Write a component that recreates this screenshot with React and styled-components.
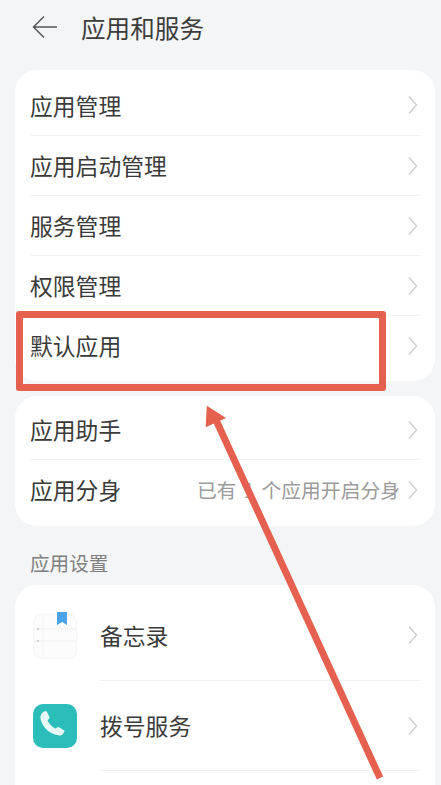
import React from "react";
import styled, { createGlobalStyle } from "styled-components";

const GlobalStyle = createGlobalStyle`
  html, body {
    margin: 0;
    padding: 0;
    height: 100%;
    overflow: hidden;
    background: #f3f5f6;
  }
  * { box-sizing: border-box; }
`;

const Screen = styled.div`
  position: relative;
  width: 441px;
  height: 785px;
  overflow: hidden;
  background: #f3f5f6;
  font-family: "Noto Sans CJK SC", "Noto Sans", sans-serif;
  color: #333;
`;

const Header = styled.header`
  display: flex;
  align-items: center;
  gap: 23px;
  height: 54px;
  padding-left: 32px;
  margin-bottom: 16px;
`;

const Title = styled.h1`
  margin: 0;
  font-size: 24.6px;
  font-weight: 400;
  color: #3c3c3c;
`;

const Card = styled.section`
  background: #fff;
  border-radius: 22px;
  margin: 0 6px 15px 15px;
  padding: ${(p) => p.$pad || "0"};
`;

const Row = styled.div`
  display: flex;
  align-items: center;
  height: ${(p) => p.$h || 60}px;
  padding: 0 17px 0 15px;
`;

const Rule = styled.div`
  height: 1px;
  background: #f0f1f2;
  margin: 0 15px 0 ${(p) => p.$left || 15}px;
`;

const Label = styled.span`
  font-size: 22.8px;
  color: #3a3a3a;
  white-space: nowrap;
`;

const Value = styled.span`
  margin-left: auto;
  margin-right: 8px;
  font-size: 19.8px;
  color: #9b9b9b;
  white-space: nowrap;
`;

const Gap = styled.span`
  margin: 0 7px;
`;

const ChevronIcon = styled.svg`
  margin-left: ${(p) => (p.$tight ? "0" : "auto")};
  width: 10px;
  height: 20px;
  flex: none;
`;

const SectionLabel = styled.div`
  height: 44px;
  padding-left: 30px;
  font-size: 19.6px;
  line-height: 44px;
  color: #7f7f7f;
`;

const IconSlot = styled.div`
  flex: none;
  width: 44px;
  margin: 0 23px 0 3px;
`;

const RedBox = styled.div`
  position: absolute;
  left: 16px;
  top: 311px;
  width: 370px;
  height: 80px;
  border: 7px solid #e5604f;
  border-radius: 3px;
`;

const ArrowLayer = styled.svg`
  position: absolute;
  inset: 0;
  width: 441px;
  height: 785px;
  pointer-events: none;
`;

const PhoneSvg = styled.svg`
  display: block;
`;

const Chevron = ({ tight }) => (
  <ChevronIcon $tight={tight} viewBox="0 0 10 20" fill="none">
    <path d="M1 1.500 8.500 10 1 18.500" stroke="#cdcfd1" strokeWidth="1.500" />
  </ChevronIcon>
);

const BackArrow = () => (
  <svg width="26" height="24" viewBox="0 0 26 24" fill="none">
    <path d="M25 12H2M12 1.500 1.500 12 12 22.500" stroke="#555" strokeWidth="1.500" />
  </svg>
);

const NotesIcon = () => (
  <svg width="44" height="48" viewBox="0 0 44 48" fill="none" style={{ display: "block" }}>
    <rect x="0.500" y="3" width="43" height="44.500" rx="8" fill="#fcfcfc" stroke="#f5f5f5" />
    <path d="M1 18H43M1 30H43" stroke="#f0f0f0" />
    <path d="M10 3V47" stroke="#f5f5f5" />
    <circle cx="5" cy="18" r="1" fill="#c2c2c2" />
    <circle cx="5" cy="30" r="1" fill="#c2c2c2" />
    <path d="M24 1H34V14L29 11 24 14Z" fill="#4ba3ea" />
  </svg>
);

const PhoneIcon = () => (
  <PhoneSvg width="44" height="44" viewBox="0 0 44 44" fill="none">
    <rect width="44" height="44" rx="10" fill="#2abdb9" />
    <path
      d="M9 9l3-2q1.500 0 2 1l2.500 5q.3 1-.7 2l-1.300 1.200q2 5 8 8.500l1.500-1.300q1-.7 2-.2l5 3q1 .7.3 1.800l-2 2.800q-1.500 1.200-4 .5C16 30 9.500 23 7.500 15q-.5-3.500 1.500-6Z"
      fill="#e8f8f7"
    />
  </PhoneSvg>
);

const topRows = ["应用管理", "应用启动管理", "服务管理", "权限管理", "默认应用"];

export default function App() {
  return (
    <Screen>
      <GlobalStyle />
      <Header>
        <BackArrow />
        <Title>应用和服务</Title>
      </Header>

      <Card $pad="5px 0 6px">
        {topRows.map((name, i) => (
          <React.Fragment key={name}>
            {i > 0 && <Rule />}
            <Row $h={i === 0 ? 60 : 59}>
              <Label>{name}</Label>
              <Chevron />
            </Row>
          </React.Fragment>
        ))}
      </Card>

      <Card $pad="4px 0 7px">
        <Row $h={59}>
          <Label>应用助手</Label>
          <Chevron />
        </Row>
        <Rule />
        <Row $h={59}>
          <Label>应用分身</Label>
          <Value>
            已有<Gap>1</Gap>个应用开启分身
          </Value>
          <Chevron tight />
        </Row>
      </Card>

      <SectionLabel>应用设置</SectionLabel>

      <Card $pad="5px 0 40px">
        <Row $h={90}>
          <IconSlot>
            <NotesIcon />
          </IconSlot>
          <Label>备忘录</Label>
          <Chevron />
        </Row>
        <Rule $left={85} />
        <Row $h={89}>
          <IconSlot>
            <PhoneIcon />
          </IconSlot>
          <Label>拨号服务</Label>
          <Chevron />
        </Row>
        <Rule $left={85} />
      </Card>

      <RedBox />
      <ArrowLayer viewBox="0 0 441 785">
        <path d="M380 778 216 420" stroke="#e5604f" strokeWidth="7" />
        <path d="M207.500 407 206.500 426 224.500 418Z" fill="#e5604f" stroke="#e5604f" strokeWidth="1.500" />
      </ArrowLayer>
    </Screen>
  );
}
